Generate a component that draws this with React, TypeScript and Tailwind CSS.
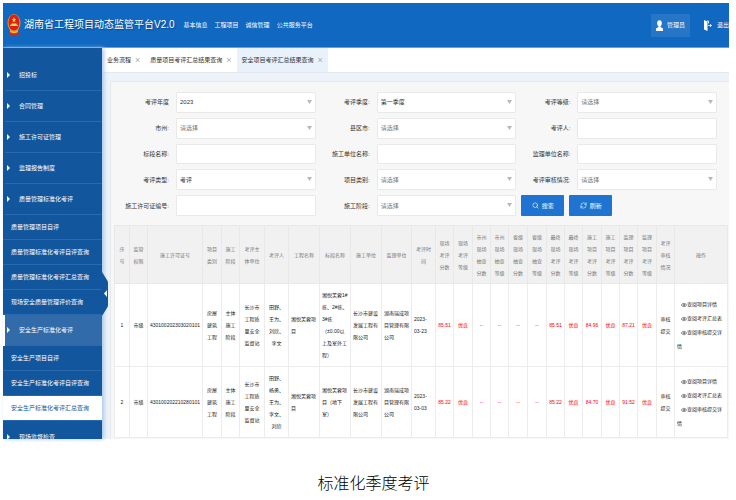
import React from 'react';
import { Eye, Search, RefreshCw } from 'lucide-react';

type Item = { text: string; kind: 'group' | 'sub'; active?: boolean };

const menu: Item[] = [
  { text: '招投标', kind: 'group' },
  { text: '合同管理', kind: 'group' },
  { text: '施工许可证管理', kind: 'group' },
  { text: '监理报告制度', kind: 'group' },
  { text: '质量管理标准化考评', kind: 'group' },
  { text: '质量管理项目自评', kind: 'sub' },
  { text: '质量管理标准化考评自评查询', kind: 'sub' },
  { text: '质量管理标准化考评汇总查询', kind: 'sub' },
  { text: '现场安全质量管理评价查询', kind: 'sub' },
  { text: '安全生产标准化考评', kind: 'group', active: true },
  { text: '安全生产项目自评', kind: 'sub' },
  { text: '安全生产标准化考评自评查询', kind: 'sub' },
  { text: '安全生产标准化考评汇总查询', kind: 'sub', active: true },
];

const tabs = [
  { text: '业务流程', active: false },
  { text: '质量项目考评汇总结果查询', active: false },
  { text: '安全项目考评汇总结果查询', active: true },
];

type Field = { label: string; value?: string; select?: boolean };

const fields: Field[] = [
  { label: '考评年度', value: '2023', select: true },
  { label: '考评季度:', value: '第一季度', select: true },
  { label: '考评等级:', value: '请选择', select: true },
  { label: '市州:', value: '请选择', select: true },
  { label: '县区市:', value: '请选择', select: true },
  { label: '考评人:' },
  { label: '标段名称:' },
  { label: '施工单位名称:' },
  { label: '监理单位名称:' },
  { label: '考评类型:', value: '考评', select: true },
  { label: '项目类别:', value: '请选择', select: true },
  { label: '考评审核情况:', value: '请选择', select: true },
  { label: '施工许可证编号:' },
  { label: '施工阶段:', value: '请选择', select: true },
];

const widths = [
  15, 18, 55, 19, 18, 25, 24, 31, 31, 31, 30, 24, 18, 19, 18, 18, 19, 19, 18, 18, 19, 18, 18, 19, 18, 53,
];

const heads = [
  '序\n号', '监管\n权限', '施工许可证号', '项目\n类别', '施工\n阶段', '考评主\n体单位', '考评人',
  '工程名称', '标段名称', '施工单位', '监理单位', '考评时\n间', '现场\n考评\n分数', '现场\n考评\n等级',
  '市州\n现场\n抽查\n分数', '市州\n现场\n抽查\n等级', '省级\n现场\n抽查\n分数', '省级\n现场\n抽查\n等级',
  '最终\n现场\n考评\n分数', '最终\n现场\n考评\n等级', '施工\n项目\n考评\n分数', '施工\n项目\n考评\n等级',
  '监理\n项目\n考评\n分数', '监理\n项目\n考评\n等级', '考评\n审核\n情况', '操作',
];

const rows = [
  {
    height: 'h-[83px]',
    info: [
      '1', '市级', '430100202303020101', '房屋\n建筑\n工程', '主体\n施工\n阶段',
      '长沙市\n工程质\n量安全\n监督站', '田野、\n王为、\n刘欣、\n李文', '湘悦芙蓉项\n目',
      '湘悦芙蓉1#\n栋、2#栋、\n3#栋\n（±0.00以\n上及室外工\n程）', '长沙市建设\n发展工程有\n限公司',
      '湖南瑞成项\n目管理有限\n公司', '2023-\n03-23',
    ],
    scores: ['85.51', '优良', '--', '--', '--', '--', '85.51', '优良', '84.96', '优良', '87.21', '优良'],
  },
  {
    height: 'h-[71px]',
    info: [
      '2', '市级', '430100202210280101', '房屋\n建筑\n工程', '主体\n施工\n阶段',
      '长沙市\n工程质\n量安全\n监督站', '田野、\n杨勇、\n王为、\n李文、\n刘欣', '湘悦芙蓉项\n目',
      '湘悦芙蓉项\n目（地下\n室）', '长沙市建设\n发展工程有\n限公司',
      '湖南瑞成项\n目管理有限\n公司', '2023-\n03-03',
    ],
    scores: ['85.22', '优良', '--', '--', '--', '--', '85.22', '优良', '84.70', '优良', '91.52', '优良'],
  },
];

function Emblem() {
  return (
    <svg viewBox="0 0 14 24" preserveAspectRatio="none" className="h-[24px] w-[14px]" aria-hidden="true">
      <path d="M3 17 L11 17 L12 23 L9 21.500 L7 23 L5 21.500 L2 23 Z" fill="#d9271c" />
      <ellipse cx="7" cy="10" rx="6.500" ry="9" fill="#e8952b" />
      <ellipse cx="7" cy="9.500" rx="5.500" ry="8" fill="#dc1f17" />
      <path d="M7 4 L7.700 6 L9 6 L8 7.400 L8.400 9.300 L7 8.200 L5.600 9.300 L6 7.400 L5 6 L6.300 6 Z" fill="#ffd84a" />
      <path d="M3 13 H11 V12 L9.500 11.500 V10.500 H4.500 V11.500 L3 12 Z" fill="#ffd84a" />
      <path d="M3 17 Q7 20 11 17 V19 Q7 21.500 3 19 Z" fill="#efb52f" />
    </svg>
  );
}

function Header() {
  return (
    <header className="flex h-[45px] items-center overflow-hidden border-b border-[#6f9fd3] bg-[#1068c0] pl-[4px] text-white">
      <Emblem />
      <h1 className="ml-[3px] shrink-0 text-[10px] leading-4 [text-shadow:1px_1px_1px_#0a4688]">湖南省工程项目动态监管平台V2.0</h1>
      <nav className="ml-[9px] flex shrink-0 gap-[7px]">
        {['基本信息', '工程项目', '诚信管理', '公共服务平台'].map((t) => (
          <a key={t} href="#">{t}</a>
        ))}
      </nav>
      <button className="ml-auto flex h-[23px] w-[39px] shrink-0 items-center justify-center gap-[4px] bg-[#2676c8]">
        <svg viewBox="0 0 7 11" className="h-[11px] w-[7px]" fill="currentColor" aria-hidden="true">
          <ellipse cx="3.500" cy="3.200" rx="2.300" ry="3" />
          <path d="M2.500 5 H4.500 V7 L7 8.500 V11 H0 V8.500 L2.500 7 Z" />
        </svg>
        管理员
      </button>
      <button className="ml-[14px] flex h-[23px] shrink-0 items-center gap-[5px]">
        <svg viewBox="0 0 8 11" className="h-[11px] w-[8px]" fill="none" stroke="currentColor" aria-hidden="true">
          <path d="M0 0 L3.500 1.500 V11 L0 9.500 Z" fill="currentColor" stroke="none" />
          <path d="M3 1 H4.500 V3.500 M4 5.500 H7.500 M6 4 L7.500 5.500 L6 7" strokeWidth="0.800" />
        </svg>
        退出
      </button>
    </header>
  );
}

function Caret() {
  return (
    <svg viewBox="0 0 3 6" className="h-[6px] w-[3px] shrink-0" fill="currentColor" aria-hidden="true">
      <path d="M0 0 L3 3 L0 6 Z" />
    </svg>
  );
}

function Sidebar() {
  return (
    <aside className="relative z-10 w-[99px] shrink-0 bg-[#12579e] pt-[12px] text-white shadow-[2px_0_4px_#a9c6e8]">
      <ul>
        {menu.map((m) =>
          m.kind === 'group' ? (
            <li key={m.text} className={m.active ? 'border-l-2 border-white bg-[#316ba9]' : 'border-l-2 border-[#12579e]'}>
              <a href="#" className="flex h-[31px] items-center gap-[9px] border-b border-[#2a69ad] pl-[2px]">
                <Caret />
                {m.text}
              </a>
            </li>
          ) : (
            <li key={m.text} className={m.active ? 'bg-white text-[#12579e]' : ''}>
              <a href="#" className="flex h-[25px] items-center border-b border-[#2a69ad] pl-[8px]">{m.text}</a>
            </li>
          ),
        )}
        <li className="h-[18px] overflow-hidden border-l-2 border-[#12579e]">
          <a href="#" className="flex h-[31px] items-center gap-[9px] pl-[2px]">
            <Caret />
            现场监督检查
          </a>
        </li>
      </ul>
      <button aria-label="收起菜单" className="absolute top-[224px] left-full h-[44px] w-[6px] text-white">
        <svg viewBox="0 0 6 44" className="h-[44px] w-[6px]" aria-hidden="true">
          <path d="M0 0 L5 8 Q6 9 6 11 V33 Q6 35 5 36 L0 44 Z" fill="#12579e" />
          <path d="M5 18 V25 L2 21.500 Z" fill="white" />
        </svg>
      </button>
    </aside>
  );
}

function FormField({ field, id }: { field: Field; id: string }) {
  const box =
    'h-full w-full appearance-none rounded-[1px] border border-[#e9e9e9] bg-white px-[3px] text-[6px] outline-none';
  const muted = field.value === '请选择';
  return (
    <div className="flex items-center gap-[7px]">
      <label htmlFor={id} className="w-[54px] shrink-0 text-right whitespace-nowrap text-[#333]">{field.label}</label>
      <div className="relative h-full flex-1">
        {field.select ? (
          <>
            <select id={id} className={`${box} ${muted ? 'text-[#777]' : 'text-[#333]'}`}>
              <option>{field.value}</option>
            </select>
            <svg viewBox="0 0 5 4" className="pointer-events-none absolute top-[8px] right-[4px] h-[4px] w-[5px]" aria-hidden="true">
              <path d="M0 0 H5 L2.500 4 Z" fill="#b8b8b8" />
            </svg>
          </>
        ) : (
          <input id={id} type="text" className={box} />
        )}
      </div>
    </div>
  );
}

function SearchForm() {
  const button =
    'flex h-full w-[43px] items-center justify-center gap-[3px] rounded-[1px] bg-[#1e74d0] text-white';
  return (
    <form className="grid h-[124px] grid-cols-3 grid-rows-5 gap-y-[5px] pr-[12px] pl-[4px]" onSubmit={(e) => e.preventDefault()}>
      {fields.map((f, i) => (
        <FormField key={f.label} field={f} id={`field-${i}`} />
      ))}
      <div className="flex gap-[5px] pl-[5px]">
        <button type="submit" className={button}>
          <Search size={7} strokeWidth={2} />
          搜索
        </button>
        <button type="reset" className={button}>
          <RefreshCw size={7} strokeWidth={2} />
          刷新
        </button>
      </div>
    </form>
  );
}

function ResultTable() {
  const centred = [0, 1, 2, 3, 4, 5, 6];
  return (
    <table className="w-full table-fixed border-collapse bg-white text-[5px] leading-3 whitespace-pre text-[#222]">
      <colgroup>
        {widths.map((w, i) => (
          <col key={i} style={{ width: w }} />
        ))}
      </colgroup>
      <thead>
        <tr className="h-[58px] bg-[#f1f1f1] text-[#777]">
          {heads.map((h, i) => (
            <th key={i} className="border border-[#e8e8e8] p-0 text-center font-normal">{h}</th>
          ))}
        </tr>
      </thead>
      <tbody>
        {rows.map((r) => (
          <tr key={r.info[2]} className={r.height}>
            {r.info.map((c, i) => (
              <td
                key={i}
                className={`border border-[#ececec] py-0 ${centred.includes(i) ? 'px-0 text-center' : 'pr-0 pl-[2px]'}`}
              >
                {c}
              </td>
            ))}
            {r.scores.map((s, i) => (
              <td key={i} className="border border-[#ececec] p-0 text-center text-[#ff0000]">{s}</td>
            ))}
            <td className="border border-[#ececec] p-0 text-center">{'审核\n提交'}</td>
            <td className="border border-[#ececec] py-0 pr-[3px] pl-[2px] leading-[14px] whitespace-normal">
              {['查阅项目详情', '查阅考评汇总表', '查阅审核提交详情'].map((a) => (
                <a key={a} href="#" className="block indent-[4px]">
                  <Eye size={6} strokeWidth={2} className="inline align-middle" />
                  {a}
                </a>
              ))}
            </td>
          </tr>
        ))}
      </tbody>
    </table>
  );
}

export default function App() {
  return (
    <div className="bg-white pt-[3px] pr-[7px] pl-[3px] font-['Liberation_Sans','Noto_Sans_CJK_SC',sans-serif] text-[6px] leading-3 text-[#333]">
      <Header />
      <div className="flex">
        <Sidebar />
        <main className="flex min-w-0 flex-1 flex-col bg-[#edf3f9]">
          <div className="flex h-[25px] items-stretch border-b border-[#e3e8ee] bg-white">
            {tabs.map((t) => (
              <div key={t.text} className={`flex items-center gap-[4px] px-[5px] ${t.active ? 'bg-[#e9f1fb]' : ''}`}>
                <span>{t.text}</span>
                <button aria-label="关闭" className="text-[9px] text-[#aaa]">×</button>
              </div>
            ))}
          </div>
          <section className="mt-[8px] ml-[8px] flex-1 border-t border-l border-[#e6e9ec] bg-[#f7f7f7] pt-[10px]">
            <SearchForm />
            <div className="mt-[9px] mr-[2px] ml-[3px]">
              <ResultTable />
            </div>
          </section>
        </main>
      </div>
      <p className="mt-[33px] pl-[15px] text-center text-[16px] leading-6 font-light text-black">标准化季度考评</p>
    </div>
  );
}
